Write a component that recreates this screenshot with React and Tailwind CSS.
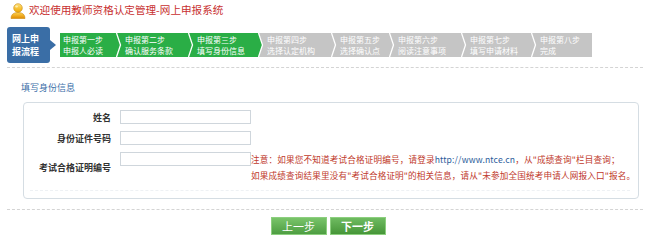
import React from 'react';

const GREEN = '#2aae46';
const GRAY = '#c5c5c5';

const steps = [
    { t1: '申报第一步', t2: '申报人必读', w: 'w-[55px]', on: true },
    { t1: '申报第二步', t2: '确认服务条款', w: 'w-[72px]', on: true },
    { t1: '申报第三步', t2: '填写身份信息', w: 'w-[70px]', on: true },
    { t1: '申报第四步', t2: '选择认定机构', w: 'w-[73px]', on: false },
    { t1: '申报第五步', t2: '选择确认点', w: 'w-[58px]', on: false },
    { t1: '申报第六步', t2: '阅读注意事项', w: 'w-[72px]', on: false },
    { t1: '申报第七步', t2: '填写申请材料', w: 'w-[70px]', on: false },
    { t1: '申报第八步', t2: '完成', w: 'w-[62px]', on: false },
];

const UserIcon = () => (
    <svg width="16" height="17" viewBox="0 0 16 17">
        <defs>
            <linearGradient id="uhead" x1="0" y1="0" x2="0" y2="1">
                <stop offset="0" stopColor="#ffe27a" />
                <stop offset="1" stopColor="#f0a800" />
            </linearGradient>
            <linearGradient id="ubody" x1="0" y1="0" x2="0" y2="1">
                <stop offset="0" stopColor="#ffd34d" />
                <stop offset="1" stopColor="#e08a00" />
            </linearGradient>
        </defs>
        <path d="M1 16.5 Q1 10.5 8 10.5 Q15 10.5 15 16.5 Z" fill="url(#ubody)" stroke="#c98a10" strokeWidth="0.6" />
        <circle cx="8" cy="6" r="4.3" fill="url(#uhead)" stroke="#c98a10" strokeWidth="0.6" />
        <ellipse cx="6.6" cy="4.6" rx="1.4" ry="1" fill="#fff6c8" opacity="0.8" />
    </svg>
);

const Chevron = ({ prev, next }) => (
    <svg width="7" height="24" viewBox="0 0 7 24" className="shrink-0 block">
        <rect x="0" y="0" width="7" height="24" fill={next} />
        <polygon points="0,0 1.5,0 5.5,12 1.5,24 0,24" fill={prev} />
        <polyline points="1.5,0 5.5,12 1.5,24" fill="none" stroke="#fff" strokeWidth="1.3" />
    </svg>
);

export default function App() {
    return (
        <div className="w-[656px] h-[241px] bg-white overflow-hidden font-['Noto_Sans_CJK_SC','Noto_Sans',sans-serif]">
            {/* header */}
            <div className="h-[20px] flex items-center pl-[10px] gap-[3px] pt-[1px]">
                <UserIcon />
                <span className="text-[10.6px] leading-none text-[#c8302f]">欢迎使用教师资格认定管理-网上申报系统</span>
            </div>

            {/* steps */}
            <div className="mt-[7px] h-[36px] flex items-center pl-[7px]">
                <div className="flex items-center">
                    <div className="w-[43px] h-[36px] bg-[#3a6ea6] rounded-[3px] text-white text-[9px] font-bold leading-[13px] flex flex-col justify-center pl-[5px]">
                        <span>网上申</span>
                        <span>报流程</span>
                    </div>
                    <svg width="6" height="10" viewBox="0 0 6 10" className="block">
                        <polygon points="0,0 6,5 0,10" fill="#3a6ea6" />
                    </svg>
                </div>
                <div className="ml-[4px] flex h-[24px]">
                    {steps.map((s, i) => {
                        const bg = s.on ? GREEN : GRAY;
                        const prev = i > 0 ? (steps[i - 1].on ? GREEN : GRAY) : null;
                        return (
                            <div key={i} className={`flex h-[24px] ${s.w} ${s.on ? 'bg-[#2aae46]' : 'bg-[#c5c5c5]'}`}>
                                {prev && <Chevron prev={prev} next={bg} />}
                                <div className="flex flex-col justify-center text-white text-[8px] leading-[11px] whitespace-nowrap pl-[3px]">
                                    <span>{s.t1}</span>
                                    <span>{s.t2}</span>
                                </div>
                            </div>
                        );
                    })}
                </div>
            </div>

            <div className="mt-[4px] ml-[7px] w-[636px] border-t border-dashed border-[#d4d4d4]" />

            {/* section */}
            <div className="mt-[14px] pl-[21px] text-[9px] leading-[12px] text-[#3b6ea8]">填写身份信息</div>

            <div className="mt-[8px] ml-[23px] w-[616px] h-[97px] border border-[#d5dde3] rounded-[4px] bg-white pt-[7px]">
                <div className="flex items-center h-[14px]">
                    <div className="w-[87px] text-right text-[9px] font-bold text-[#333] leading-none">姓名</div>
                    <div className="ml-[9px] w-[131px] h-[14px] border border-[#cfd6dc] bg-white" />
                </div>
                <div className="mt-[7px] flex items-center h-[14px]">
                    <div className="w-[87px] text-right text-[9px] font-bold text-[#333] leading-none">身份证件号码</div>
                    <div className="ml-[9px] w-[131px] h-[14px] border border-[#cfd6dc] bg-white" />
                </div>
                <div className="mt-[6px] flex items-start">
                    <div className="w-[87px] self-center text-right text-[9px] font-bold text-[#333] leading-none">考试合格证明编号</div>
                    <div className="ml-[9px] mt-[1px] w-[131px] h-[14px] border border-[#cfd6dc] bg-white shrink-0" />
                    <div className="text-[8.6px] tracking-[0.15px] leading-[16px] text-[#c0392b] whitespace-nowrap">
                        <div>
                            注意：如果您不知道考试合格证明编号，请登录<span className="text-[#2b5b9a]">http://www.ntce.cn</span>，从"成绩查询"栏目查询；
                        </div>
                        <div>如果成绩查询结果里没有"考试合格证明"的相关信息，请从"未参加全国统考申请人网报入口"报名。</div>
                    </div>
                </div>
                <div className="mt-[7px] ml-[6px] w-[600px] border-t border-dashed border-[#eef1f4]" />
            </div>

            <div className="mt-[10px] ml-[7px] w-[636px] border-t border-dashed border-[#d4d4d4]" />

            {/* buttons */}
            <div className="mt-[7px] flex justify-center gap-[3px]">
                <button className="w-[56px] h-[18px] border border-[#8ccf7e] bg-gradient-to-b from-[#79c46a] to-[#4e9e42] text-white text-[11px] leading-none">
                    上一步
                </button>
                <button className="w-[56px] h-[18px] border border-[#8ccf7e] bg-gradient-to-b from-[#6fbb61] to-[#469638] text-white text-[11px] font-bold leading-none">
                    下一步
                </button>
            </div>
        </div>
    );
}
